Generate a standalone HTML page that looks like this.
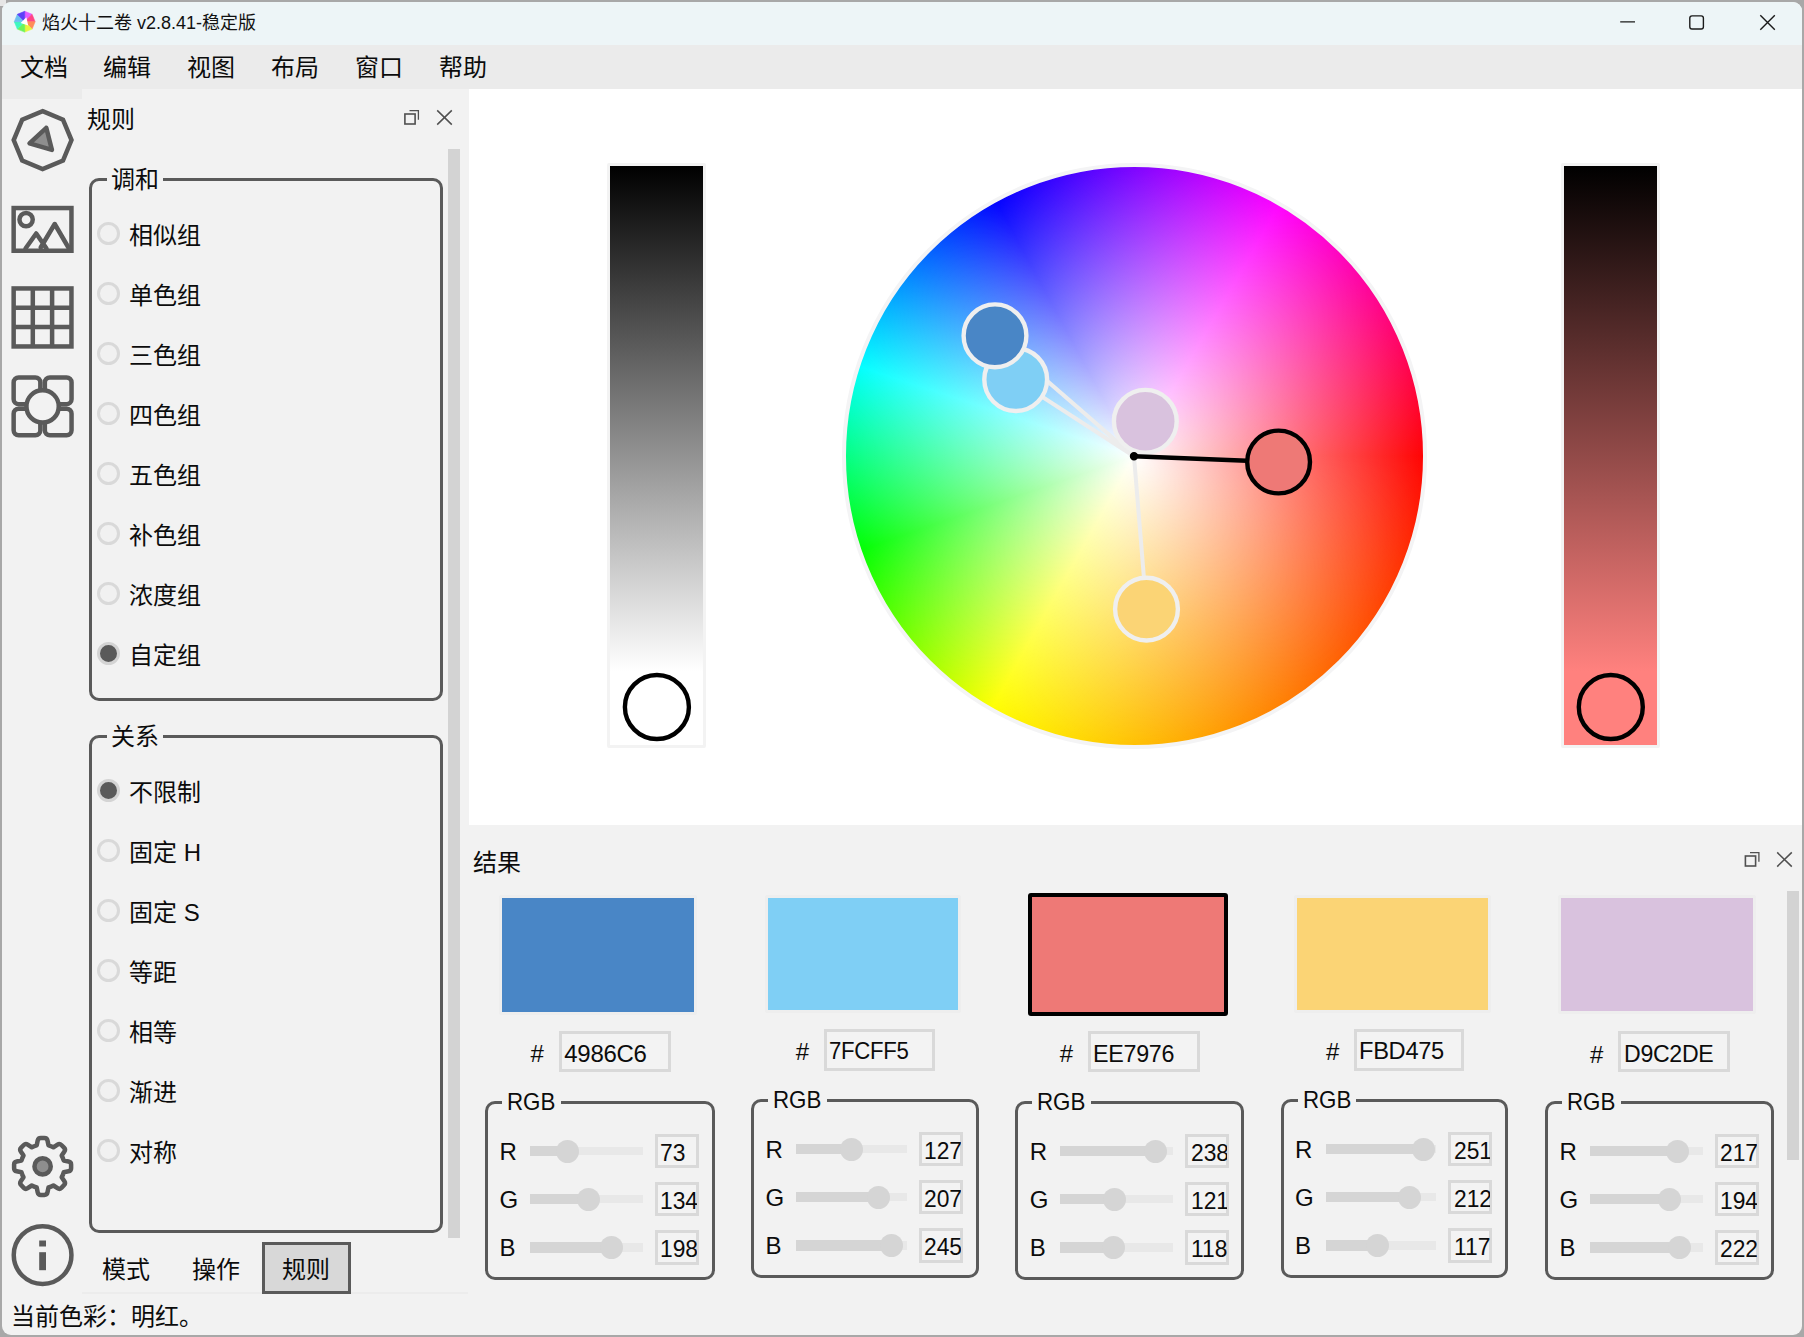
<!DOCTYPE html>
<html lang="zh-CN">
<head>
<meta charset="utf-8">
<title>焰火十二卷 v2.8.41-稳定版</title>
<style>
*{box-sizing:border-box;margin:0;padding:0}
html,body{width:1804px;height:1337px;overflow:hidden}
body{background:#a8a8a8;font-family:"Liberation Sans","Noto Sans CJK SC",sans-serif;font-size:24px;color:#0c0c0c;position:relative}
.abs{position:absolute}
#win{position:absolute;left:2px;top:2px;width:1800px;height:1333px;border-radius:9px;background:#f2f2f2;overflow:hidden}
#titlebar{position:absolute;left:0;top:0;width:1800px;height:43px;background:#edf5f7}
#title{position:absolute;left:40px;top:9px;font-size:18px;line-height:24px;color:#111;white-space:nowrap}
#menubar{position:absolute;left:0;top:43px;width:1800px;height:44px;background:#ebebeb}
.mi{margin:1px 0 0 -2px;position:absolute;top:0;height:44px;line-height:44px;font-size:24px;white-space:nowrap}
#canvas{position:absolute;left:466px;top:87px;width:1334px;height:737px;background:#fff}
.t{margin:1px 0 0 -1px;position:absolute;white-space:nowrap;line-height:32px;height:32px;font-size:24px}
.gb{position:absolute;border:3px solid #5a5a5a;border-radius:10px}
.gbl{margin:1px 0 0 -1px;position:absolute;background:#f2f2f2;white-space:nowrap;line-height:30px;height:30px;font-size:24px;padding:0 4px}
.rd{position:absolute;width:23px;height:23px;border-radius:50%;border:3px solid #d9d9d9;background:#f1f1f1}
.rd.on{background:#5a5a5a;border-color:#d4d4d4}
.sb{position:absolute;background:#d3d3d3}
.sx{display:inline-block;transform-origin:0 50%}
.nx{display:inline-block;transform:scaleX(0.93);transform-origin:0 50%;margin-right:-3.5px}
.inp{position:absolute;border:3px solid #d9d9d9;background:#f3f3f3;white-space:nowrap;overflow:hidden;font-size:24px}
</style>
</head>
<body>
<div class="abs" style="left:0;top:0;width:6px;height:6px;background:#e6e6e6"></div>
<div id="win">
  <div id="titlebar">
    <svg class="abs" style="left:8px;top:4px" width="32" height="32" viewBox="8 4 32 32"><path d="M22.7,19.7L22.7,9.3L30.1,12.3Z" fill="#e45cff" stroke="#e45cff" stroke-width="0.6"/><path d="M22.7,19.7L30.1,12.3L33.1,19.7Z" fill="#ff4486" stroke="#ff4486" stroke-width="0.6"/><path d="M22.7,19.7L33.1,19.7L30.1,27.1Z" fill="#ff8c5a" stroke="#ff8c5a" stroke-width="0.6"/><path d="M22.7,19.7L30.1,27.1L22.7,30.1Z" fill="#e6f63e" stroke="#e6f63e" stroke-width="0.6"/><path d="M22.7,19.7L22.7,30.1L15.3,27.1Z" fill="#6cf45a" stroke="#6cf45a" stroke-width="0.6"/><path d="M22.7,19.7L15.3,27.1L12.3,19.7Z" fill="#3ef8c0" stroke="#3ef8c0" stroke-width="0.6"/><path d="M22.7,19.7L12.3,19.7L15.3,12.3Z" fill="#6cbef0" stroke="#6cbef0" stroke-width="0.6"/><path d="M22.7,19.7L15.3,12.3L22.7,9.3Z" fill="#5e40f8" stroke="#5e40f8" stroke-width="0.6"/><path d="M24.4,15.3L18.6,21L26.2,23.4Z" fill="#fff"/></svg>
    <svg class="abs" style="left:1600px;top:0" width="200" height="43" viewBox="1602 2 200 43" fill="none" stroke="#1a1a1a" stroke-width="1.4">
      <path d="M1620.2,21.9H1635"/>
      <rect x="1689.8" y="15.9" width="13.6" height="13.1" rx="2.2"/>
      <path d="M1760.3,15.2L1774.8,29.8M1774.8,15.2L1760.3,29.8"/>
    </svg>
    <div id="title">焰火十二卷 v2.8.41-稳定版</div>
  </div>
  <div id="menubar">
    <div class="mi" style="left:20px">文档</div>
    <div class="mi" style="left:103px">编辑</div>
    <div class="mi" style="left:187px">视图</div>
    <div class="mi" style="left:271px">布局</div>
    <div class="mi" style="left:355px">窗口</div>
    <div class="mi" style="left:439px">帮助</div>
  </div>
  <div id="canvas">
    <div class="abs" style="left:139.4px;top:73.6px;width:99px;height:585.2px;border:3px solid #f3f3f3;border-radius:2px;background:linear-gradient(to bottom,#000 0,#fff 505px,#fff 100%)"></div>
    <div class="abs" style="left:1093.3px;top:73.6px;width:99px;height:585.2px;border:3px solid #f3f3f3;border-radius:2px;background:linear-gradient(to bottom,#000 0,#ff817e 505px,#ff817e 100%)"></div>
    <div class="abs" style="left:373.5px;top:74.2px;width:585.8px;height:585.8px;border-radius:50%;border:4.5px solid #f4f4f5;background:radial-gradient(closest-side,#fff 0%,rgba(255,255,255,0) 101.6%),conic-gradient(from 90deg,#f00 0deg,#ff0 119.5deg,#0f0 161deg,#0ff 198deg,#00f 241.5deg,#f0f 300deg,#f00 360deg)"></div>
    <svg class="abs" style="left:0;top:0" width="1334" height="737" viewBox="468 89 1334 737" fill="none">
      <g stroke="#ececec" stroke-width="4">
        <path d="M1134,456.3L995,335.8M1134,456.3L1015.7,379.6M1134,456.3L1145.3,421.3M1134,456.3L1146.5,609.1"/>
      </g>
      <g stroke="#efefef" stroke-width="4.4">
        <circle cx="1145.3" cy="421.3" r="31.4" fill="#d9c2de"/>
        <circle cx="1146.5" cy="609.1" r="31.4" fill="#fbd475"/>
        <circle cx="1015.7" cy="379.6" r="31.4" fill="#7fcff5"/>
        <circle cx="995" cy="335.8" r="31.4" fill="#4986c6"/>
      </g>
      <g stroke="#000" stroke-width="4.4">
        <path d="M1134,456.3L1278.6,462"/>
        <circle cx="1278.6" cy="462" r="31.4" fill="#ee7976"/>
        <circle cx="1134" cy="456.3" r="2" fill="#000"/>
        <circle cx="656.9" cy="707" r="32" fill="#fff"/>
        <circle cx="1610.8" cy="707" r="32" fill="#ff817e"/>
      </g>
    </svg>
  </div>
  <div class="abs" style="left:466px;top:87px;width:1px;height:737px;background:#f2f2f2"></div>
  <div class="abs" style="left:466px;top:823px;width:1334px;height:1px;background:#f2f2f2"></div>
  <div class="abs" style="left:0;top:87px;width:79.5px;height:9.5px;background:#ebebeb"></div>
  <svg class="abs" style="left:0;top:87px" width="80" height="1220" viewBox="0 87 80 1220" fill="none" stroke="#5a5a5a" stroke-width="4.5" stroke-linejoin="round" stroke-linecap="round">
    <path d="M40.6,109.2 L61.0,117.7 L69.5,138.1 L61.0,158.5 L40.6,167.0 L20.2,158.5 L11.7,138.1 L20.2,117.7Z" stroke-linejoin="miter"/>
    <path d="M44.3,125.8 L27.5,141.3 L49.9,147.9Z" fill="#8e8e8e"/>
    <rect x="11.65" y="206.05" width="57.8" height="42.7" stroke-linejoin="miter"/>
    <circle cx="24.1" cy="217.6" r="6.65"/>
    <path d="M23.5,246.5 L34.2,231.5 L44.5,246.5 M38.7,245.5 L52.7,222 L67,246.5"/>
    <rect x="11.65" y="286.45" width="57.8" height="58" stroke-linejoin="miter"/>
    <path d="M30.8,286.5V344.4M50.1,286.5V344.4M11.7,305.8H69.4M11.7,325.1H69.4" stroke-linecap="butt"/>
    <rect x="11.65" y="375.45" width="26.7" height="26.7" rx="5"/>
    <rect x="42.85" y="375.45" width="26.7" height="26.7" rx="5"/>
    <rect x="11.65" y="406.65" width="26.7" height="26.7" rx="5"/>
    <rect x="42.85" y="406.65" width="26.7" height="26.7" rx="5"/>
    <circle cx="40.6" cy="404.4" r="16.15" fill="#f2f2f2"/>
    <path d="M34.7,1143.3L35.7,1138.5Q36.2,1135.9 38.8,1135.9L42.4,1135.9Q45.0,1135.9 45.5,1138.5L46.5,1143.3A21.9,21.9 0 0 1 51.4,1145.3L55.5,1142.6Q57.6,1141.2 59.4,1143.0L62.0,1145.6Q63.8,1147.4 62.4,1149.5L59.7,1153.6A21.9,21.9 0 0 1 61.7,1158.5L66.5,1159.5Q69.1,1160.0 69.1,1162.6L69.1,1166.2Q69.1,1168.8 66.5,1169.3L61.7,1170.3A21.9,21.9 0 0 1 59.7,1175.2L62.4,1179.3Q63.8,1181.4 62.0,1183.2L59.4,1185.8Q57.6,1187.6 55.5,1186.2L51.4,1183.5A21.9,21.9 0 0 1 46.5,1185.5L45.5,1190.3Q45.0,1192.9 42.4,1192.9L38.8,1192.9Q36.2,1192.9 35.7,1190.3L34.7,1185.5A21.9,21.9 0 0 1 29.8,1183.5L25.7,1186.2Q23.6,1187.6 21.8,1185.8L19.2,1183.2Q17.4,1181.4 18.8,1179.3L21.5,1175.2A21.9,21.9 0 0 1 19.5,1170.3L14.7,1169.3Q12.1,1168.8 12.1,1166.2L12.1,1162.6Q12.1,1160.0 14.7,1159.5L19.5,1158.5A21.9,21.9 0 0 1 21.5,1153.6L18.8,1149.5Q17.4,1147.4 19.2,1145.6L21.8,1143.0Q23.6,1141.2 25.7,1142.6L29.8,1145.3A21.9,21.9 0 0 1 34.7,1143.3Z"/>
    <circle cx="40.6" cy="1164.4" r="8.15" fill="#8e8e8e"/>
    <circle cx="40.6" cy="1253.1" r="28.85"/>
    <rect x="37.2" y="1238.5" width="6.8" height="6" fill="#5a5a5a" stroke="none"/>
    <rect x="37.2" y="1250.2" width="6.8" height="18" fill="#5a5a5a" stroke="none"/>
  </svg>
  <div class="t" style="left:86px;top:101px">规则</div>
  <svg class="abs" style="left:398px;top:104px" width="60" height="24" viewBox="400 106 60 24" fill="none" stroke="#505050">
    <rect x="404.9" y="114" width="10.2" height="10" stroke-width="1.6"/>
    <path d="M409.5,110.7H418.4V119.7" stroke-width="1.3"/>
    <path d="M437.2,110.4L451.8,124.6M451.8,110.4L437.2,124.6" stroke-width="1.5"/>
  </svg>
  <div class="sb" style="left:446px;top:147px;width:12px;height:1089px"></div>
  <div class="gb" style="left:87.1px;top:176.3px;width:354px;height:522.3px"></div>
  <div class="gbl" style="left:106px;top:162px">调和</div>
  <div class="rd" style="left:95.3px;top:220px"></div><div class="t" style="left:128px;top:217px">相似组</div>
  <div class="rd" style="left:95.3px;top:280px"></div><div class="t" style="left:128px;top:277px">单色组</div>
  <div class="rd" style="left:95.3px;top:340px"></div><div class="t" style="left:128px;top:337px">三色组</div>
  <div class="rd" style="left:95.3px;top:400px"></div><div class="t" style="left:128px;top:397px">四色组</div>
  <div class="rd" style="left:95.3px;top:460px"></div><div class="t" style="left:128px;top:457px">五色组</div>
  <div class="rd" style="left:95.3px;top:520px"></div><div class="t" style="left:128px;top:517px">补色组</div>
  <div class="rd" style="left:95.3px;top:580px"></div><div class="t" style="left:128px;top:577px">浓度组</div>
  <div class="rd on" style="left:95.3px;top:640px"></div><div class="t" style="left:128px;top:637px">自定组</div>
  <div class="gb" style="left:87.1px;top:733.1px;width:354px;height:497.8px"></div>
  <div class="gbl" style="left:106px;top:719px">关系</div>
  <div class="rd on" style="left:95.3px;top:777px"></div><div class="t" style="left:128px;top:774px">不限制</div>
  <div class="rd" style="left:95.3px;top:837px"></div><div class="t" style="left:128px;top:834px">固定 H</div>
  <div class="rd" style="left:95.3px;top:897px"></div><div class="t" style="left:128px;top:894px">固定 S</div>
  <div class="rd" style="left:95.3px;top:957px"></div><div class="t" style="left:128px;top:954px">等距</div>
  <div class="rd" style="left:95.3px;top:1017px"></div><div class="t" style="left:128px;top:1014px">相等</div>
  <div class="rd" style="left:95.3px;top:1077px"></div><div class="t" style="left:128px;top:1074px">渐进</div>
  <div class="rd" style="left:95.3px;top:1137px"></div><div class="t" style="left:128px;top:1134px">对称</div>
  <div class="abs" style="left:80px;top:1290px;width:386px;height:2px;background:#ececec"></div>
  <div class="abs" style="left:260.1px;top:1240.1px;width:89.2px;height:52px;background:#d8d8d8;border:3px solid #5a5a5a"></div>
  <div class="t" style="left:101px;top:1251px">模式</div>
  <div class="t" style="left:191px;top:1251px">操作</div>
  <div class="t" style="left:281px;top:1251px">规则</div>
  <div class="t" style="left:472px;top:844px">结果</div>
  <svg class="abs" style="left:1738px;top:846px" width="60" height="24" viewBox="1740 848 60 24" fill="none" stroke="#505050">
    <rect x="1745.4" y="856" width="10.2" height="10" stroke-width="1.6"/>
    <path d="M1750,852.7H1758.9V861.7" stroke-width="1.3"/>
    <path d="M1777.2,852.4L1791.8,866.6M1791.8,852.4L1777.2,866.6" stroke-width="1.5"/>
  </svg>
  <div class="sb" style="left:1785px;top:888.6px;width:12.2px;height:269.4px"></div>
  <div class="abs" style="left:496.8px;top:892.9px;width:198.5px;height:119.8px;background:#4986c6;border:3px solid #eeeeee;border-radius:2px"></div>
  <div class="t" style="left:529.6px;top:1035.3px">#</div>
  <div class="inp" style="left:557px;top:1029.1px;width:111.8px;height:40.8px;padding-left:2.3px;letter-spacing:-0.3px;line-height:39.6px"><span class="sx" style="transform:scaleX(1.0)">4986C6</span></div>
  <div class="gb" style="left:483.0px;top:1099px;width:229.8px;height:178.6px"></div>
  <div class="gbl" style="left:501.0px;top:1085.5px;padding:0 5px;margin-top:-0.5px"><span class="nx">RGB</span></div>
  <div class="t" style="left:498.5px;top:1133.0px">R</div>
  <div class="abs" style="left:528.0px;top:1144.8px;width:112.6px;height:8.4px;background:#e8e8e8"></div>
  <div class="abs" style="left:528.0px;top:1143.8px;width:37.2px;height:10.4px;background:#d5d5d5"></div>
  <div class="abs" style="left:553.7px;top:1137.5px;width:23px;height:23px;border-radius:50%;background:#d5d5d5"></div>
  <div class="inp" style="left:652.6px;top:1131.5px;width:44.2px;height:34.8px;padding-left:2.8px;line-height:32.8px;overflow:clip;overflow-clip-margin:1px"><span class="sx" style="transform:scaleX(0.95)">73</span></div>
  <div class="t" style="left:498.5px;top:1181.2px">G</div>
  <div class="abs" style="left:528.0px;top:1193.0px;width:112.6px;height:8.4px;background:#e8e8e8"></div>
  <div class="abs" style="left:528.0px;top:1192.0px;width:58.6px;height:10.4px;background:#d5d5d5"></div>
  <div class="abs" style="left:575.1px;top:1185.7px;width:23px;height:23px;border-radius:50%;background:#d5d5d5"></div>
  <div class="inp" style="left:652.6px;top:1179.7px;width:44.2px;height:34.8px;padding-left:2.8px;line-height:32.8px;overflow:clip;overflow-clip-margin:1px"><span class="sx" style="transform:scaleX(0.95)">134</span></div>
  <div class="t" style="left:498.5px;top:1229.4px">B</div>
  <div class="abs" style="left:528.0px;top:1241.2px;width:112.6px;height:8.4px;background:#e8e8e8"></div>
  <div class="abs" style="left:528.0px;top:1240.2px;width:81.1px;height:10.4px;background:#d5d5d5"></div>
  <div class="abs" style="left:597.6px;top:1233.9px;width:23px;height:23px;border-radius:50%;background:#d5d5d5"></div>
  <div class="inp" style="left:652.6px;top:1227.9px;width:44.2px;height:34.8px;padding-left:2.8px;line-height:32.8px;overflow:clip;overflow-clip-margin:1px"><span class="sx" style="transform:scaleX(0.95)">198</span></div>
  <div class="abs" style="left:762.9px;top:892.9px;width:196.4px;height:118.3px;background:#7fcff5;border:3px solid #eeeeee;border-radius:2px"></div>
  <div class="t" style="left:794.8px;top:1033.2px">#</div>
  <div class="inp" style="left:822px;top:1026.9px;width:111.1px;height:42.1px;padding-left:2.3px;letter-spacing:-0.3px;line-height:38.4px"><span class="sx" style="transform:scaleX(0.924)">7FCFF5</span></div>
  <div class="gb" style="left:749.0px;top:1097px;width:227.8px;height:179.0px"></div>
  <div class="gbl" style="left:767.0px;top:1083.5px;padding:0 5px;margin-top:-0.5px"><span class="nx">RGB</span></div>
  <div class="t" style="left:764.5px;top:1131.0px">R</div>
  <div class="abs" style="left:794.0px;top:1142.8px;width:110.7px;height:8.4px;background:#e8e8e8"></div>
  <div class="abs" style="left:794.0px;top:1141.8px;width:55.2px;height:10.4px;background:#d5d5d5"></div>
  <div class="abs" style="left:837.7px;top:1135.5px;width:23px;height:23px;border-radius:50%;background:#d5d5d5"></div>
  <div class="inp" style="left:916.6px;top:1129.5px;width:44.2px;height:34.8px;padding-left:2.8px;line-height:32.8px;overflow:clip;overflow-clip-margin:1px"><span class="sx" style="transform:scaleX(0.95)">127</span></div>
  <div class="t" style="left:764.5px;top:1179.2px">G</div>
  <div class="abs" style="left:794.0px;top:1191.0px;width:110.7px;height:8.4px;background:#e8e8e8"></div>
  <div class="abs" style="left:794.0px;top:1190.0px;width:82.7px;height:10.4px;background:#d5d5d5"></div>
  <div class="abs" style="left:865.2px;top:1183.7px;width:23px;height:23px;border-radius:50%;background:#d5d5d5"></div>
  <div class="inp" style="left:916.6px;top:1177.7px;width:44.2px;height:34.8px;padding-left:2.8px;line-height:32.8px;overflow:clip;overflow-clip-margin:1px"><span class="sx" style="transform:scaleX(0.95)">207</span></div>
  <div class="t" style="left:764.5px;top:1227.4px">B</div>
  <div class="abs" style="left:794.0px;top:1239.2px;width:110.7px;height:8.4px;background:#e8e8e8"></div>
  <div class="abs" style="left:794.0px;top:1238.2px;width:95.8px;height:10.4px;background:#d5d5d5"></div>
  <div class="abs" style="left:878.3px;top:1231.9px;width:23px;height:23px;border-radius:50%;background:#d5d5d5"></div>
  <div class="inp" style="left:916.6px;top:1225.9px;width:44.2px;height:34.8px;padding-left:2.8px;line-height:32.8px;overflow:clip;overflow-clip-margin:1px"><span class="sx" style="transform:scaleX(0.95)">245</span></div>
  <div class="abs" style="left:1025.5px;top:891.2px;width:200.5px;height:122.7px;background:#ee7976;border:4.5px solid #000;border-radius:3px"></div>
  <div class="t" style="left:1058.8px;top:1035.4px">#</div>
  <div class="inp" style="left:1086.1px;top:1029.1px;width:112px;height:41px;padding-left:2.3px;letter-spacing:-0.3px;line-height:39.6px"><span class="sx" style="transform:scaleX(0.97)">EE7976</span></div>
  <div class="gb" style="left:1013.2px;top:1099px;width:228.4px;height:178.6px"></div>
  <div class="gbl" style="left:1031.2px;top:1085.5px;padding:0 5px;margin-top:-0.5px"><span class="nx">RGB</span></div>
  <div class="t" style="left:1028.7px;top:1133.0px">R</div>
  <div class="abs" style="left:1058.2px;top:1144.8px;width:112.6px;height:8.4px;background:#e8e8e8"></div>
  <div class="abs" style="left:1058.2px;top:1143.8px;width:95.1px;height:10.4px;background:#d5d5d5"></div>
  <div class="abs" style="left:1141.8px;top:1137.5px;width:23px;height:23px;border-radius:50%;background:#d5d5d5"></div>
  <div class="inp" style="left:1182.8px;top:1131.5px;width:44.2px;height:34.8px;padding-left:2.8px;line-height:32.8px;overflow:clip;overflow-clip-margin:1px"><span class="sx" style="transform:scaleX(0.95)">238</span></div>
  <div class="t" style="left:1028.7px;top:1181.2px">G</div>
  <div class="abs" style="left:1058.2px;top:1193.0px;width:112.6px;height:8.4px;background:#e8e8e8"></div>
  <div class="abs" style="left:1058.2px;top:1192.0px;width:54.0px;height:10.4px;background:#d5d5d5"></div>
  <div class="abs" style="left:1100.7px;top:1185.7px;width:23px;height:23px;border-radius:50%;background:#d5d5d5"></div>
  <div class="inp" style="left:1182.8px;top:1179.7px;width:44.2px;height:34.8px;padding-left:2.8px;line-height:32.8px;overflow:clip;overflow-clip-margin:1px"><span class="sx" style="transform:scaleX(0.95)">121</span></div>
  <div class="t" style="left:1028.7px;top:1229.4px">B</div>
  <div class="abs" style="left:1058.2px;top:1241.2px;width:112.6px;height:8.4px;background:#e8e8e8"></div>
  <div class="abs" style="left:1058.2px;top:1240.2px;width:53.0px;height:10.4px;background:#d5d5d5"></div>
  <div class="abs" style="left:1099.7px;top:1233.9px;width:23px;height:23px;border-radius:50%;background:#d5d5d5"></div>
  <div class="inp" style="left:1182.8px;top:1227.9px;width:44.2px;height:34.8px;padding-left:2.8px;line-height:32.8px;overflow:clip;overflow-clip-margin:1px"><span class="sx" style="transform:scaleX(0.95)">118</span></div>
  <div class="abs" style="left:1292px;top:892.9px;width:197.2px;height:118.3px;background:#fbd475;border:3px solid #eeeeee;border-radius:2px"></div>
  <div class="t" style="left:1325px;top:1033.2px">#</div>
  <div class="inp" style="left:1352.1px;top:1026.9px;width:110.2px;height:42.1px;padding-left:2.3px;letter-spacing:-0.3px;line-height:38.4px"><span class="sx" style="transform:scaleX(0.985)">FBD475</span></div>
  <div class="gb" style="left:1278.5px;top:1097px;width:227.0px;height:179.0px"></div>
  <div class="gbl" style="left:1296.5px;top:1083.5px;padding:0 5px;margin-top:-0.5px"><span class="nx">RGB</span></div>
  <div class="t" style="left:1294.0px;top:1131.0px">R</div>
  <div class="abs" style="left:1323.5px;top:1142.8px;width:110.7px;height:8.4px;background:#e8e8e8"></div>
  <div class="abs" style="left:1323.5px;top:1141.8px;width:97.8px;height:10.4px;background:#d5d5d5"></div>
  <div class="abs" style="left:1409.8px;top:1135.5px;width:23px;height:23px;border-radius:50%;background:#d5d5d5"></div>
  <div class="inp" style="left:1446.1px;top:1129.5px;width:44.2px;height:34.8px;padding-left:2.8px;line-height:32.8px;overflow:clip;overflow-clip-margin:1px"><span class="sx" style="transform:scaleX(0.95)">251</span></div>
  <div class="t" style="left:1294.0px;top:1179.2px">G</div>
  <div class="abs" style="left:1323.5px;top:1191.0px;width:110.7px;height:8.4px;background:#e8e8e8"></div>
  <div class="abs" style="left:1323.5px;top:1190.0px;width:84.4px;height:10.4px;background:#d5d5d5"></div>
  <div class="abs" style="left:1396.4px;top:1183.7px;width:23px;height:23px;border-radius:50%;background:#d5d5d5"></div>
  <div class="inp" style="left:1446.1px;top:1177.7px;width:44.2px;height:34.8px;padding-left:2.8px;line-height:32.8px;overflow:clip;overflow-clip-margin:1px"><span class="sx" style="transform:scaleX(0.95)">212</span></div>
  <div class="t" style="left:1294.0px;top:1227.4px">B</div>
  <div class="abs" style="left:1323.5px;top:1239.2px;width:110.7px;height:8.4px;background:#e8e8e8"></div>
  <div class="abs" style="left:1323.5px;top:1238.2px;width:51.7px;height:10.4px;background:#d5d5d5"></div>
  <div class="abs" style="left:1363.7px;top:1231.9px;width:23px;height:23px;border-radius:50%;background:#d5d5d5"></div>
  <div class="inp" style="left:1446.1px;top:1225.9px;width:44.2px;height:34.8px;padding-left:2.8px;line-height:32.8px;overflow:clip;overflow-clip-margin:1px"><span class="sx" style="transform:scaleX(0.95)">117</span></div>
  <div class="abs" style="left:1556.3px;top:892.9px;width:198.1px;height:119.5px;background:#d9c2de;border:3px solid #eeeeee;border-radius:2px"></div>
  <div class="t" style="left:1589px;top:1035.5px">#</div>
  <div class="inp" style="left:1616.4px;top:1029.3px;width:111.3px;height:40.8px;padding-left:2.3px;letter-spacing:-0.3px;line-height:39.6px"><span class="sx" style="transform:scaleX(0.963)">D9C2DE</span></div>
  <div class="gb" style="left:1543.0px;top:1099px;width:228.6px;height:178.6px"></div>
  <div class="gbl" style="left:1561.0px;top:1085.5px;padding:0 5px;margin-top:-0.5px"><span class="nx">RGB</span></div>
  <div class="t" style="left:1558.5px;top:1133.0px">R</div>
  <div class="abs" style="left:1588.0px;top:1144.8px;width:112.6px;height:8.4px;background:#e8e8e8"></div>
  <div class="abs" style="left:1588.0px;top:1143.8px;width:87.7px;height:10.4px;background:#d5d5d5"></div>
  <div class="abs" style="left:1664.2px;top:1137.5px;width:23px;height:23px;border-radius:50%;background:#d5d5d5"></div>
  <div class="inp" style="left:1712.6px;top:1131.5px;width:44.2px;height:34.8px;padding-left:2.8px;line-height:32.8px;overflow:clip;overflow-clip-margin:1px"><span class="sx" style="transform:scaleX(0.95)">217</span></div>
  <div class="t" style="left:1558.5px;top:1181.2px">G</div>
  <div class="abs" style="left:1588.0px;top:1193.0px;width:112.6px;height:8.4px;background:#e8e8e8"></div>
  <div class="abs" style="left:1588.0px;top:1192.0px;width:79.7px;height:10.4px;background:#d5d5d5"></div>
  <div class="abs" style="left:1656.2px;top:1185.7px;width:23px;height:23px;border-radius:50%;background:#d5d5d5"></div>
  <div class="inp" style="left:1712.6px;top:1179.7px;width:44.2px;height:34.8px;padding-left:2.8px;line-height:32.8px;overflow:clip;overflow-clip-margin:1px"><span class="sx" style="transform:scaleX(0.95)">194</span></div>
  <div class="t" style="left:1558.5px;top:1229.4px">B</div>
  <div class="abs" style="left:1588.0px;top:1241.2px;width:112.6px;height:8.4px;background:#e8e8e8"></div>
  <div class="abs" style="left:1588.0px;top:1240.2px;width:89.5px;height:10.4px;background:#d5d5d5"></div>
  <div class="abs" style="left:1666.0px;top:1233.9px;width:23px;height:23px;border-radius:50%;background:#d5d5d5"></div>
  <div class="inp" style="left:1712.6px;top:1227.9px;width:44.2px;height:34.8px;padding-left:2.8px;line-height:32.8px;overflow:clip;overflow-clip-margin:1px"><span class="sx" style="transform:scaleX(0.95)">222</span></div>
  <div class="t" style="left:10px;top:1298px">当前色彩：明红。</div>
</div>
</body>
</html>
